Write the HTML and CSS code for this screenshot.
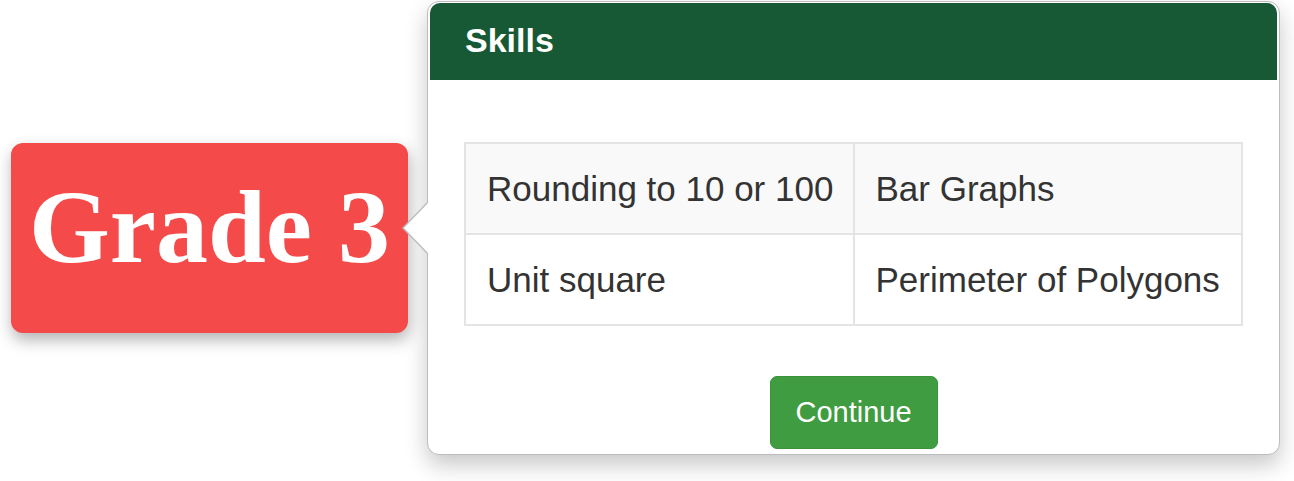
FILE: index.html
```html
<!DOCTYPE html>
<html lang="en">
<head>
<meta charset="utf-8">
<title>Grade 3 skills</title>
<link rel="stylesheet" href="styles.css">
</head>
<body>
  <div class="stage">
    <div class="grade-badge">Grade 3</div>
    <div class="popover">
      <div class="popover-title">Skills</div>
      <div class="popover-content">
        <table class="skills">
          <tr class="striped">
            <td>Rounding to 10 or 100</td>
            <td>Bar Graphs</td>
          </tr>
          <tr>
            <td>Unit square</td>
            <td>Perimeter of Polygons</td>
          </tr>
        </table>
        <div class="actions">
          <button class="btn-continue" type="button">Continue</button>
        </div>
      </div>
    </div>
  </div>
</body>
</html>
```

FILE: styles.css
```css
html, body {
  margin: 0;
  padding: 0;
  background: #ffffff;
}

body {
  min-height: 100vh;
}

.stage {
  display: flex;
  align-items: flex-start;
  gap: 19px;
  padding: 1px 0 30px 11px;
}

.grade-badge {
  flex: 0 0 auto;
  width: 397px;
  height: 190px;
  margin-top: 142px;
  display: flex;
  align-items: center;
  justify-content: center;
  background: #f54a4a;
  border-radius: 12px;
  box-shadow: 1px 7px 16px rgba(0, 0, 0, 0.3);
  color: #ffffff;
  font-family: "Liberation Serif", "Times New Roman", serif;
  font-weight: bold;
  font-size: 104px;
  line-height: 1;
  padding-bottom: 22px;
  box-sizing: border-box;
}

.popover {
  position: relative;
  flex: 0 0 auto;
  width: 853px;
  box-sizing: border-box;
  background: #ffffff;
  border: 1px solid #bdbdbd;
  border-radius: 12px;
  box-shadow: 0 10px 22px rgba(0, 0, 0, 0.22);
  font-family: "Liberation Sans", Arial, sans-serif;
  color: #333333;
}

/* left-pointing arrow toward the badge */
.popover::before,
.popover::after {
  content: "";
  position: absolute;
  top: 50%;
  width: 0;
  height: 0;
  border-style: solid;
  border-color: transparent;
}

.popover::before {
  left: -26px;
  margin-top: -27px;
  border-width: 27px 26px 27px 0;
  border-right-color: #bdbdbd;
}

.popover::after {
  left: -24px;
  margin-top: -26px;
  border-width: 26px 25px 26px 0;
  border-right-color: #ffffff;
}

.popover-title {
  height: 77px;
  margin: 1px 2px 0;
  padding: 0 35px;
  background: #175934;
  border-radius: 10px 10px 0 0;
  color: #ffffff;
  font-weight: bold;
  font-size: 34px;
  line-height: 75px;
}

.popover-content {
  padding: 62px 36px 5px;
}

.skills {
  width: 100%;
  table-layout: fixed;
  border-collapse: collapse;
  font-size: 35px;
  color: #333333;
}

.skills td {
  height: 89px;
  padding: 0 21px;
  border: 2px solid #e4e4e4;
  vertical-align: middle;
  white-space: nowrap;
}

.skills .striped td {
  background: #f9f9f9;
}

.actions {
  display: flex;
  justify-content: center;
  margin-top: 50px;
}

.btn-continue {
  width: 168px;
  height: 73px;
  border: 1px solid #3a933c;
  border-radius: 7px;
  background: #3f9c40;
  color: #ffffff;
  font-family: "Liberation Sans", Arial, sans-serif;
  font-size: 29px;
  padding: 0;
  cursor: pointer;
}
```
